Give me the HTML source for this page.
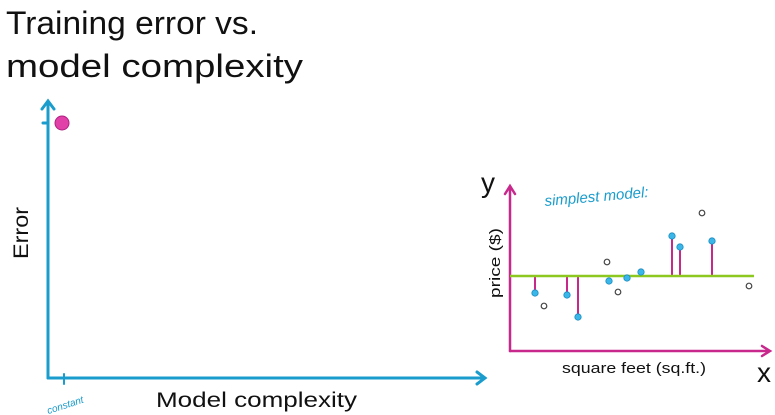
<!DOCTYPE html>
<html><head><meta charset="utf-8"><style>
html,body{margin:0;padding:0;background:#fff;width:775px;height:415px;overflow:hidden;font-family:"Liberation Sans",sans-serif;}
</style></head><body>
<svg width="775" height="415" xmlns="http://www.w3.org/2000/svg">
<text x="6" y="34" font-size="32" fill="#111" textLength="252" lengthAdjust="spacingAndGlyphs">Training error vs.</text>
<text x="6" y="77" font-size="32" fill="#111" textLength="297" lengthAdjust="spacingAndGlyphs">model complexity</text>
<g stroke="#1a9ccc" stroke-width="3" fill="none" stroke-linecap="round">
<path d="M48 378 V102 M42 109 L48 101 L54 109"/>
<path d="M48 378 H484 M477 372 L485 378 L477 384"/>
<path d="M43 123 H48" />
<path d="M64 374 V384" stroke-width="2"/>
</g>
<circle cx="62" cy="123" r="7" fill="#e040a8" stroke="#b02080" stroke-width="1"/>
<text x="28" y="233" font-size="21" fill="#111" transform="rotate(-90 28 233)" text-anchor="middle" textLength="52" lengthAdjust="spacingAndGlyphs">Error</text>
<text x="156" y="407" font-size="21" fill="#111" textLength="201" lengthAdjust="spacingAndGlyphs">Model complexity</text>
<text x="46" y="410" font-size="10" fill="#1a9ccc" font-style="italic" transform="rotate(-18 60 405)">constant</text>
<text x="481" y="192" font-size="28" fill="#111">y</text>
<text x="757" y="382" font-size="28" fill="#111">x</text>
<text x="545" y="206" font-size="15" fill="#1a9ccc" font-style="italic" transform="rotate(-5 545 206)">simplest model:</text>
<text x="500" y="263" font-size="15" fill="#111" transform="rotate(-90 500 263)" text-anchor="middle" textLength="70" lengthAdjust="spacingAndGlyphs">price ($)</text>
<text x="562" y="373" font-size="15" fill="#111" textLength="144" lengthAdjust="spacingAndGlyphs">square feet (sq.ft.)</text>
<g stroke="#c8288c" stroke-width="2.5" fill="none" stroke-linecap="round">
<path d="M510 351 V187 M505 194 L510 186 L515 194"/>
<path d="M510 351 H769 M762 346 L770 351 L762 356"/>
</g>
<g stroke="#c8288c" stroke-width="2">
<path d="M535 276V293 M567 276V295 M578 276V317 M672 276V236 M680 276V247 M712 276V241"/>
</g>
<path d="M510 276 H754" stroke="#8cc820" stroke-width="2.5"/>
<g fill="#fff" stroke="#444" stroke-width="1.2">
<circle cx="544" cy="306" r="2.8"/><circle cx="607" cy="262" r="2.8"/><circle cx="618" cy="292" r="2.8"/><circle cx="702" cy="213" r="2.8"/><circle cx="749" cy="286" r="2.8"/>
</g>
<g fill="#3ab6e8" stroke="#1a8cc0" stroke-width="0.8">
<circle cx="535" cy="293" r="3.2"/><circle cx="567" cy="295" r="3.2"/><circle cx="578" cy="317" r="3.2"/><circle cx="609" cy="281" r="3.2"/><circle cx="627" cy="278" r="3.2"/><circle cx="641" cy="272" r="3.2"/><circle cx="672" cy="236" r="3.2"/><circle cx="680" cy="247" r="3.2"/><circle cx="712" cy="241" r="3.2"/>
</g>
</svg>
</body></html>
